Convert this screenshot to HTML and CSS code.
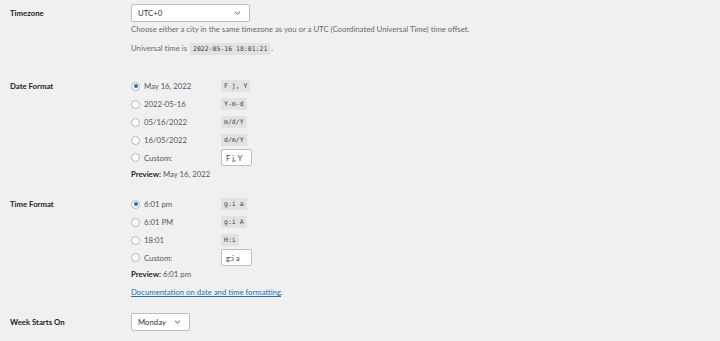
FILE: index.html
```html
<!DOCTYPE html>
<html>
<head>
<meta charset="utf-8">
<link rel="stylesheet" href="styles.css">
</head>
<body>
<div class="settings">
  <div class="row row-tz">
    <div class="label">Timezone</div>
    <div class="field">
      <div class="select select-tz"><span>UTC+0</span><span class="chev"><svg width="7" height="4" viewBox="0 0 7 4"><path d="M1 0.8 L3.5 3.2 L6 0.8" fill="none" stroke="#50575e" stroke-width="1"/></svg></span></div>
      <p class="desc">Choose either a city in the same timezone as you or a UTC (Coordinated Universal Time) time offset.</p>
      <p class="utc">Universal time is <code>2022-05-16 18:01:21</code>.</p>
    </div>
  </div>

  <div class="row row-date">
    <div class="label">Date Format</div>
    <div class="field">
      <div class="opt"><span class="radio checked"></span><span class="otext">May 16, 2022</span><code>F j, Y</code></div>
      <div class="opt"><span class="radio"></span><span class="otext">2022-05-16</span><code>Y-m-d</code></div>
      <div class="opt"><span class="radio"></span><span class="otext">05/16/2022</span><code>m/d/Y</code></div>
      <div class="opt"><span class="radio"></span><span class="otext">16/05/2022</span><code>d/m/Y</code></div>
      <div class="opt opt-custom"><span class="radio"></span><span class="otext">Custom:</span><span class="input">F j, Y</span></div>
      <p class="preview"><strong>Preview:</strong> May 16, 2022</p>
    </div>
  </div>

  <div class="row row-time">
    <div class="label">Time Format</div>
    <div class="field">
      <div class="opt"><span class="radio checked"></span><span class="otext">6:01 pm</span><code>g:i a</code></div>
      <div class="opt"><span class="radio"></span><span class="otext">6:01 PM</span><code>g:i A</code></div>
      <div class="opt"><span class="radio"></span><span class="otext">18:01</span><code>H:i</code></div>
      <div class="opt opt-custom"><span class="radio"></span><span class="otext">Custom:</span><span class="input">g:i a</span></div>
      <p class="preview"><strong>Preview:</strong> 6:01 pm</p>
      <p class="doc"><a href="#">Documentation on date and time formatting</a>.</p>
    </div>
  </div>

  <div class="row row-week">
    <div class="label">Week Starts On</div>
    <div class="field">
      <div class="select select-week"><span>Monday</span><span class="chev"><svg width="7" height="4" viewBox="0 0 7 4"><path d="M1 0.8 L3.5 3.2 L6 0.8" fill="none" stroke="#50575e" stroke-width="1"/></svg></span></div>
    </div>
  </div>
</div>
</body>
</html>
```

FILE: styles.css
```css
html, body {
  margin: 0;
  padding: 0;
  background: #f0f0f1;
}
body {
  font-family: Lato, "Noto Sans", sans-serif;
  font-size: 7.75px;
  color: #3c434a;
}
.settings {
  padding: 4px 0 0 10px;
}
.row {
  display: grid;
  grid-template-columns: 121px 1fr;
}
.label {
  font-weight: 700;
  color: #1d2327;
  line-height: 18px;
}
.row-date { margin-top: 21px; }
.row-time { margin-top: 14px; }
.row-week { margin-top: 14px; }

.select {
  box-sizing: border-box;
  height: 18px;
  background: #fff;
  border: 1px solid #bcbec2;
  border-radius: 2px;
  display: flex;
  align-items: center;
  justify-content: space-between;
  padding: 0 8px 0 6px;
  color: #2c3338;
}
.select-tz { width: 119px; }
.select-week { width: 59px; }
.chev { display: flex; align-items: center; }

p { margin: 0; }
.desc {
  line-height: 14px;
  color: #646970;
}
.utc {
  margin-top: 5px;
  line-height: 14px;
  color: #646970;
}
code {
  font-family: "DejaVu Sans Mono", "Liberation Mono", monospace;
  font-size: 6.5px;
  background: #e2e2e3;
  color: #3c434a;
  padding: 2px 3px;
}
.utc code { margin: 0 1px; }

.opt {
  display: flex;
  align-items: center;
  height: 18px;
}
.opt-custom { height: 17px; }
.radio {
  box-sizing: border-box;
  width: 9px;
  height: 9px;
  border-radius: 50%;
  border: 1px solid #b4b6b9;
  background: #fff;
  margin-left: 0;
  margin-right: 4px;
  flex: none;
  position: relative;
}
.radio.checked::before {
  content: "";
  position: absolute;
  left: 1.5px;
  top: 1.5px;
  width: 4px;
  height: 4px;
  border-radius: 50%;
  background: #2271b1;
}
.otext {
  width: 77px;
  color: #50575e;
}
.input {
  box-sizing: border-box;
  width: 31px;
  height: 17px;
  background: #fff;
  border: 1px solid #bcbec2;
  border-radius: 2px;
  padding: 0 4px;
  display: flex;
  align-items: center;
  color: #3c434a;
}
.preview {
  line-height: 14px;
  margin-top: 1px;
  color: #50575e;
}
.preview strong {
  font-weight: 700;
  color: #1d2327;
}
.doc {
  margin-top: 4px;
  line-height: 14px;
}
.doc a {
  color: #2271b1;
  text-decoration: underline;
}
```
